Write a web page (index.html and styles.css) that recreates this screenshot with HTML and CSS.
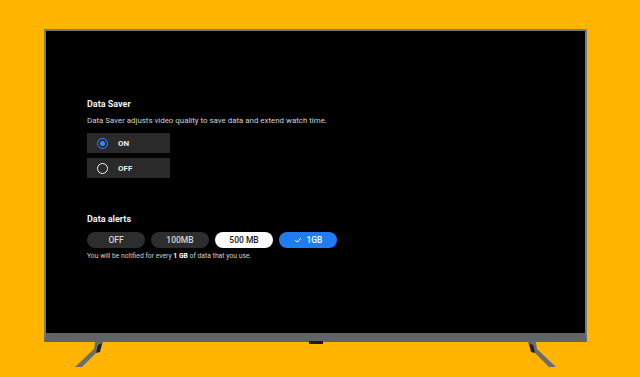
FILE: index.html
```html
<!DOCTYPE html>
<html>
<head>
<meta charset="utf-8">
<link rel="stylesheet" href="styles.css">
</head>
<body>
<div class="scene">
  <div class="tv">
    <div class="frame">
      <div class="screen">
        <h2 class="title">Data Saver</h2>
        <p class="desc">Data Saver adjusts video quality to save data and extend watch time.</p>
        <div class="radios">
          <div class="radio">
            <span class="dot on"></span><span class="rlabel">ON</span>
          </div>
          <div class="radio">
            <span class="dot"></span><span class="rlabel">OFF</span>
          </div>
        </div>
        <h2 class="title alerts">Data alerts</h2>
        <div class="pills">
          <span class="pill">OFF</span>
          <span class="pill">100MB</span>
          <span class="pill light">500 MB</span>
          <span class="pill blue"><svg class="check" viewBox="0 0 10 10" width="8" height="8"><path d="M1.5 5.2 L4 7.6 L8.6 2.6" fill="none" stroke="#fff" stroke-width="1.2"/></svg>1GB</span>
        </div>
        <p class="note">You will be notified for every <b>1 GB</b> of data that you use.</p>
      </div>
    </div>
    <div class="stand">
      <svg class="leg" viewBox="0 0 30 25" width="30" height="25">
        <polygon points="21,0 29,0 27,6 8,25 1,25 20,7" fill="#6a6d70"/>
        <polygon points="24,3 28,1 26,10 22,11" fill="#1e1e1e"/>
      </svg>
      <span class="notch"></span>
      <svg class="leg" viewBox="0 0 30 25" width="30" height="25">
        <polygon points="9,0 1,0 3,6 22,25 29,25 10,7" fill="#6a6d70"/>
        <polygon points="6,3 2,1 4,10 8,11" fill="#1e1e1e"/>
      </svg>
    </div>
  </div>
</div>
</body>
</html>
```
FILE: styles.css
```css
html, body {
  margin: 0;
  padding: 0;
}
body {
  background: #ffb400;
  font-family: Roboto, "Liberation Sans", sans-serif;
  width: 640px;
  height: 377px;
  overflow: hidden;
}
.scene {
  padding: 29px 0 0 44px;
}
.tv {
  width: 543px;
}
.frame {
  border: 2px solid #717c88;
  border-bottom: 9px solid #616467;
  background: #000;
  height: 302px;
}
.screen {
  padding: 68px 0 0 41px;
  color: #fff;
}
.title {
  margin: 0;
  font-size: 9px;
  line-height: 11px;
  font-weight: 700;
  color: #f2f2f2;
}
.desc {
  margin: 6px 0 0;
  font-size: 7.9px;
  line-height: 10px;
  color: #d2d2d2;
}
.radios {
  margin-top: 7px;
  display: flex;
  flex-direction: column;
  gap: 5px;
}
.radio {
  width: 83px;
  height: 20px;
  background: #2a2a2a;
  display: flex;
  align-items: center;
  padding-left: 10px;
  box-sizing: border-box;
}
.dot {
  width: 11px;
  height: 11px;
  box-sizing: border-box;
  border: 1.5px solid #f0f0f0;
  border-radius: 50%;
  display: flex;
  align-items: center;
  justify-content: center;
}
.dot.on {
  border-color: #3b86f7;
}
.dot.on::after {
  content: "";
  width: 5px;
  height: 5px;
  border-radius: 50%;
  background: #3b86f7;
}
.rlabel {
  margin-left: 10px;
  font-size: 8px;
  font-weight: 700;
  color: #ececec;
}
.alerts {
  margin-top: 36px;
}
.pills {
  margin-top: 7px;
  display: flex;
  gap: 6px;
}
.pill {
  width: 58px;
  height: 16px;
  border-radius: 8px;
  background: #2d2d2d;
  color: #d4d4d4;
  font-size: 8.5px;
  font-weight: 500;
  display: flex;
  align-items: center;
  justify-content: center;
}
.pill.light {
  background: #fff;
  color: #1a1a1a;
}
.pill.blue {
  background: #1f7cf2;
  color: #fff;
}
.check {
  margin-right: 5px;
}
.note {
  margin: 4px 0 0;
  font-size: 6.8px;
  line-height: 8px;
  color: #d0d0d0;
}
.note b {
  color: #fff;
}
.stand {
  display: flex;
  justify-content: space-between;
  align-items: flex-start;
  padding: 0 30px;
}
.notch {
  width: 14px;
  height: 3px;
  background: #1c1c1c;
  margin-top: -1px;
}
```
